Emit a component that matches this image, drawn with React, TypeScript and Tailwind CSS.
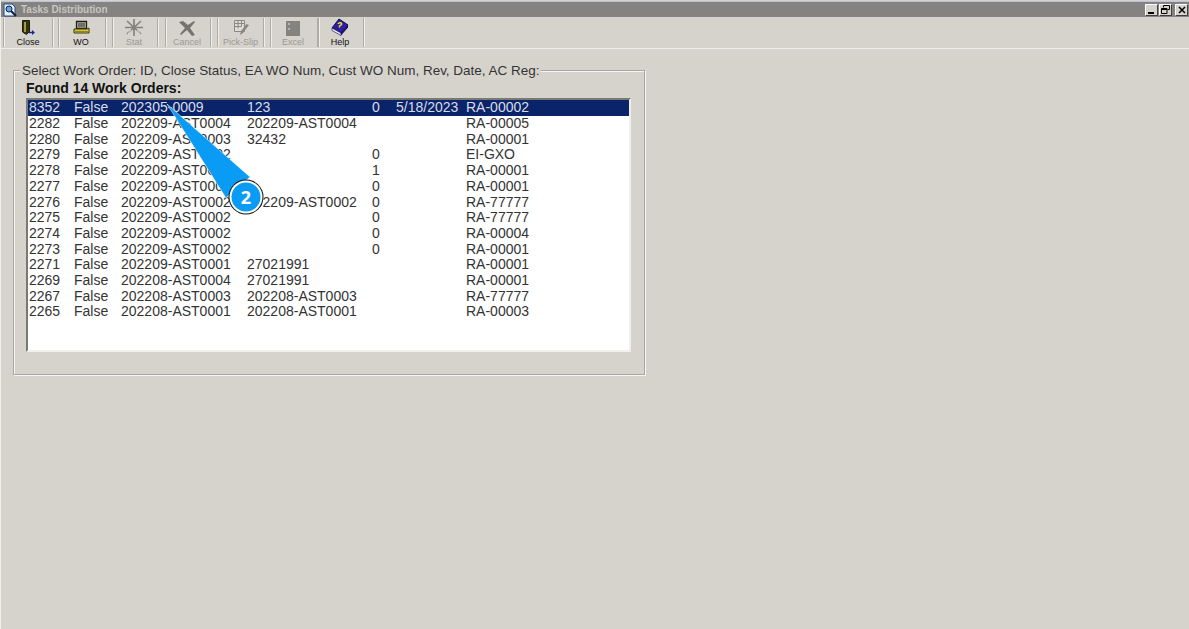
import React from 'react';

const font = { fontFamily: '"Liberation Sans", Arial, sans-serif' };

const rows = [
  ['8352', 'False', '202305-0009', '123', '0', '5/18/2023', 'RA-00002'],
  ['2282', 'False', '202209-AST0004', '202209-AST0004', '', '', 'RA-00005'],
  ['2280', 'False', '202209-AST0003', '32432', '', '', 'RA-00001'],
  ['2279', 'False', '202209-AST0002', '', '0', '', 'EI-GXO'],
  ['2278', 'False', '202209-AST0002', '', '1', '', 'RA-00001'],
  ['2277', 'False', '202209-AST0002', '', '0', '', 'RA-00001'],
  ['2276', 'False', '202209-AST0002', '202209-AST0002', '0', '', 'RA-77777'],
  ['2275', 'False', '202209-AST0002', '', '0', '', 'RA-77777'],
  ['2274', 'False', '202209-AST0002', '', '0', '', 'RA-00004'],
  ['2273', 'False', '202209-AST0002', '', '0', '', 'RA-00001'],
  ['2271', 'False', '202209-AST0001', '27021991', '', '', 'RA-00001'],
  ['2269', 'False', '202208-AST0004', '27021991', '', '', 'RA-00001'],
  ['2267', 'False', '202208-AST0003', '202208-AST0003', '', '', 'RA-77777'],
  ['2265', 'False', '202208-AST0001', '202208-AST0001', '', '', 'RA-00003'],
];

const CloseIcon = () => (
  <svg width="20" height="20" viewBox="0 0 20 20">
    <path d="M4.500 2.500h7v11l-3 3-4-2.500z" fill="#33331a" stroke="#1c1c10" />
    <path d="M6 4h2v10H6z" fill="#a89c2e" />
    <path d="M11 14.500h5" stroke="#1c2a9c" strokeWidth="1.500" />
    <path d="M14 12l3 2.500-3 2.500z" fill="#1c2a9c" />
  </svg>
);

const WoIcon = () => (
  <svg width="20" height="20" viewBox="0 0 20 20">
    <path d="M5.500 3.500h10v7h-10z" fill="#b8b6a8" stroke="#1f1f1a" strokeWidth="1.300" />
    <path d="M7 6h7M7 8h7" stroke="#2a2a24" />
    <path d="M3 11h13l2-1v5H3z" fill="#d9c830" stroke="#3a3614" />
    <path d="M3.500 13.500h14" stroke="#8f8420" />
  </svg>
);

const StatIcon = () => (
  <svg width="20" height="20" viewBox="0 0 20 20" stroke="#84827d" strokeWidth="1.700">
    <path d="M10 1v17M3 3l14 13M17 3L3 16M1 9.500h18" />
    <path d="M7 12l-3 4M13 12l3 4" stroke="#f2f0ea" strokeWidth="0.800" />
  </svg>
);

const CancelIcon = () => (
  <svg width="20" height="20" viewBox="0 0 20 20" fill="#75736e">
    <path d="M2 4l4-1 5 4 6-4 1 1-5 6 5 7-3 1-5-6-6 5-1-1 5-6z" />
  </svg>
);

const PickIcon = () => (
  <svg width="20" height="20" viewBox="0 0 20 20">
    <path d="M3.500 2.500h10v11h-10z" fill="#dedbd4" stroke="#8a8884" />
    <path d="M3.500 5.500h10M3.500 8.500h7M7 2.500v8M10.500 2.500v6" stroke="#8a8884" />
    <path d="M18 7l-6 8-3 2 1-4 5.500-7z" fill="#8a8884" />
  </svg>
);

const ExcelIcon = () => (
  <svg width="20" height="20" viewBox="0 0 20 20">
    <path d="M3 3h14v15H3z" fill="#85837f" />
    <path d="M5 6h2M5 11h2" stroke="#e4e2dc" />
  </svg>
);

const HelpIcon = () => (
  <svg width="20" height="20" viewBox="0 0 20 20">
    <path d="M9 1l9 6-7 8-9-5z" fill="#2b1fa0" stroke="#10084f" />
    <path d="M2 10l9 5v2.500l-9-5z" fill="#e8e4f0" stroke="#10084f" strokeWidth=".6" />
    <path d="M11 15l7-8v2.500l-7 8z" fill="#170f70" />
    <path d="M8 6c1-2 4-1.500 3.500.5l-2 1.500v1.500" stroke="#f4d93a" strokeWidth="1.500" fill="none" />
  </svg>
);

const tools = [
  { label: 'Close', icon: <CloseIcon />, on: true, cls: 'w-[50px] mr-[5px] border-r' },
  { label: 'WO', icon: <WoIcon />, on: true, cls: 'w-[48px] mr-[6px] border-r pr-[2px]' },
  { label: 'Stat', icon: <StatIcon />, on: false, cls: 'w-[46px] mr-[7px] border-r pr-[2px]' },
  { label: 'Cancel', icon: <CancelIcon />, on: false, cls: 'w-[46px] mr-[6px] border-r pr-[2px]' },
  { label: 'Pick-Slip', icon: <PickIcon />, on: false, cls: 'w-[47px] mr-[6px] border-r' },
  { label: 'Excel', icon: <ExcelIcon />, on: false, cls: 'w-[48px] border-r pr-[2px]' },
  { label: 'Help', icon: <HelpIcon />, on: true, cls: 'w-[46px] border-r pr-[2px]' },
];

const WinBtn = ({ children }: { children: React.ReactNode }) => (
  <div className="w-[13px] h-[12px] bg-[#d6d3cd] border-t border-l border-t-white border-l-white border-r border-b border-r-[#404040] border-b-[#404040] flex items-center justify-center">
    {children}
  </div>
);

export default function App() {
  return (
    <div className="w-[1189px] h-[629px] overflow-hidden bg-[#d6d3cd] relative border-l border-l-[#f0eee8]" style={font}>
      {/* Title bar */}
      <div className="h-[16px] mt-px bg-[#858381] flex items-center pl-[2px] pr-[1px] border-t border-t-[#b9c6d8]">
        <svg width="15" height="14" viewBox="0 0 15 14">
          <path d="M1 1h8l3 3v9H1z" fill="#e8f0f8" stroke="#2a4a8a" />
          <circle cx="6" cy="6" r="3" fill="#5aa8e8" stroke="#123" />
          <path d="M8 8l5 5" stroke="#123" strokeWidth="2" />
        </svg>
        <span className="ml-[3px] text-[10px] font-bold text-[#c8c6c0] whitespace-nowrap">Tasks Distribution</span>
        <div className="ml-auto flex items-center gap-[1px]">
          <WinBtn><div className="w-[6px] h-[2px] bg-black mt-[6px] -ml-[2px]" /></WinBtn>
          <WinBtn>
            <svg width="9" height="9" viewBox="0 0 9 9" fill="none" stroke="#000"><path d="M2.500 2.500V.5h6v4H6.500M.5 3.500h5.500v5H.5zM.5 4.500h5.500" /></svg>
          </WinBtn>
          <div className="ml-[2px]"><WinBtn>
            <svg width="8" height="8" viewBox="0 0 8 8" stroke="#000" strokeWidth="1.500"><path d="M1 1l6 6M7 1L1 7" /></svg>
          </WinBtn></div>
        </div>
      </div>

      {/* Toolbar */}
      <div className="h-[32px] flex items-stretch pl-[2px] border-b border-b-[#efede8]">
        {tools.map((t) => (
          <div key={t.label} className={`${t.cls} flex flex-col items-center justify-start pt-px border-l border-l-[#aeaca6] border-r-[#aeaca6] shadow-[1px_0_0_#f0eeea,inset_1px_0_0_#f0eeea] my-[1px]`}>
            <div className="h-[18px] flex items-center justify-center">{t.icon}</div>
            <span className={`text-[9px] leading-[10px] whitespace-nowrap ${t.on ? 'text-[#111]' : 'text-[#9a9892]'}`}>{t.label}</span>
          </div>
        ))}
      </div>

      {/* Group box */}
      <div className="relative ml-[12px] mt-[21px] w-[632px] h-[305px] border border-[#a9a7a1] shadow-[1px_1px_0_#f6f4f0,inset_1px_1px_0_#f6f4f0] pl-[12px] pt-[9px]">
        <span className="absolute left-[6px] -top-[8px] bg-[#d6d3cd] px-[2px] text-[13.47px] leading-[15px] text-[#333] whitespace-nowrap">
          Select Work Order: ID, Close Status, EA WO Num, Cust WO Num, Rev, Date, AC Reg:
        </span>
        <div className="text-[14px] leading-[16px] font-bold text-[#111] h-[18px]">Found 14 Work Orders:</div>
        <div className="w-[605px] h-[254px] bg-white border-t-2 border-l-2 border-t-[#7a7874] border-l-[#7a7874] border-r-2 border-b-2 border-r-[#f2f0ec] border-b-[#f2f0ec] pt-[0.4px] text-[14px] text-[#333]">
          {rows.map((r, i) => (
            <div key={r[0]} className={`h-[15.7px] leading-[15.7px] flex whitespace-nowrap pl-[1px] ${i === 0 ? 'bg-[#0a246a] text-[#d8dce8]' : ''}`}>
              <span className="w-[45px]">{r[0]}</span>
              <span className="w-[47px]">{r[1]}</span>
              <span className="w-[126px]">{r[2]}</span>
              <span className="w-[125px]">{r[3]}</span>
              <span className="w-[24px]">{r[4]}</span>
              <span className="w-[70px]">{r[5]}</span>
              <span>{r[6]}</span>
            </div>
          ))}
        </div>
      </div>

      {/* Callout */}
      <svg className="absolute left-[149px] top-[95px]" width="120" height="125" viewBox="150 95 120 125">
        <path d="M167 104L250 177L226 198z" fill="#0a9cf5" stroke="#fff" strokeWidth="0.5" />
        <circle cx="246" cy="197" r="17.500" fill="#111" />
        <circle cx="246" cy="197" r="16.500" fill="#fff" />
        <circle cx="246" cy="197" r="14.500" fill="#0a9cf5" />
        <text x="246" y="203.500" textAnchor="middle" fontSize="18" fontWeight="700" fill="#fff" fontFamily="'Open Sans', sans-serif">2</text>
      </svg>
    </div>
  );
}
